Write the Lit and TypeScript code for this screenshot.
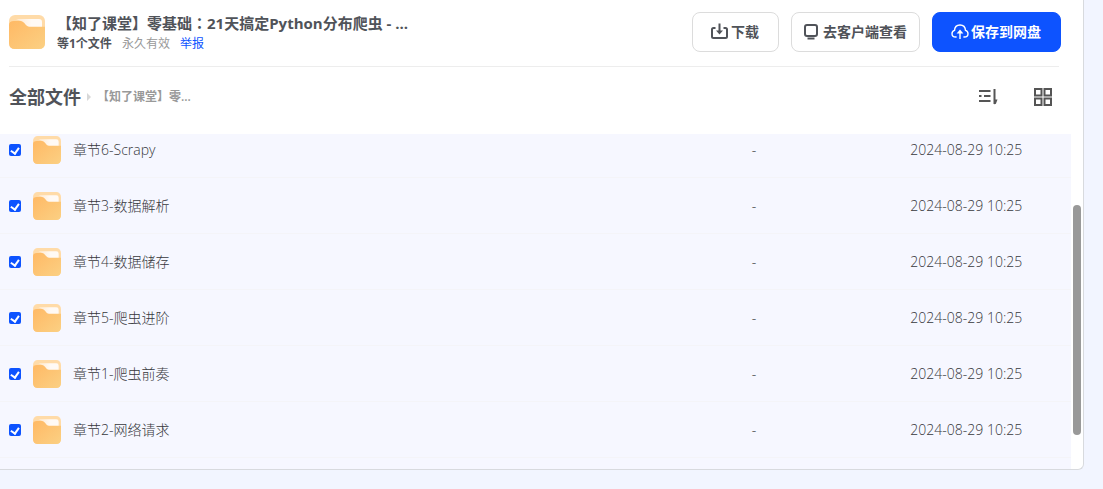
import { LitElement, html, css, svg } from "lit";
import { customElement, property } from "lit/decorators.js";

interface FileEntry {
  name: string;
  size: string;
  modified: string;
}

const FILES: FileEntry[] = [
  "章节6-Scrapy",
  "章节3-数据解析",
  "章节4-数据储存",
  "章节5-爬虫进阶",
  "章节1-爬虫前奏",
  "章节2-网络请求",
].map((name) => ({ name, size: "-", modified: "2024-08-29 10:25" }));

const ICONS = {
  download: svg`<path d="M4.5 5H2.5Q1 5 1 6.5V13.5Q1 15 2.5 15H14.5Q16 15 16 13.5V6.5Q16 5 14.5 5H12.5M8.5 0.5V9" /><path d="M5 7.5H12L8.5 11.5Z" fill="currentColor" stroke="none" />`,
  client: svg`<rect x="2" y="2" width="12" height="11" rx="2" /><path d="M4.5 15.5H11.5" />`,
  upload: svg`<path d="M5.6 14H4.8C2.5 14 1 12.6 1 10.7C1 9 2 7.9 3.5 7.4C3.7 4 6 2 9 2C12 2 14.3 4 14.5 7.4C16 7.9 17 9 17 10.7C17 12.6 15.5 14 13.2 14H12.4M9 8V16" /><path d="M5.6 10.4L9 6.6L12.4 10.4Z" fill="currentColor" stroke="none" />`,
  sort: svg`<path d="M0 3H11.5M0 8H2.5M5 8H11.5M0 13H11.5M15.5 1V16" /><path d="M15.5 11.5H18.5L17 15.5L15.5 16.5Z" fill="currentColor" stroke="none" />`,
  grid: svg`<rect x="1" y="1" width="6.5" height="6.5" /><rect x="10.5" y="1" width="6.5" height="6.5" /><rect x="1" y="10.5" width="6.5" height="6.5" /><rect x="10.5" y="10.5" width="6.5" height="6.5" />`,
};

@customElement("line-icon")
class LineIcon extends LitElement {
  static styles = css`
    :host {
      display: block;
      flex: none;
    }
    .glyph {
      display: block;
      fill: none;
      stroke: currentColor;
      stroke-width: 2;
    }
    .thin {
      stroke-width: 1.4;
    }
  `;

  @property() name: keyof typeof ICONS = "download";

  render() {
    const thin = this.name === "upload" ? "thin" : "";
    return html`<svg class="glyph ${thin}" width="19" height="18" viewBox="0 0 19 18" aria-hidden="true">
      ${ICONS[this.name]}
    </svg>`;
  }
}

@customElement("folder-icon")
class FolderIcon extends LitElement {
  static styles = css`
    :host {
      display: block;
      flex: none;
    }
    .folder {
      display: block;
      width: 100%;
      height: 100%;
    }
  `;

  render() {
    return html`<svg class="folder" viewBox="0 0 36 34" preserveAspectRatio="none" aria-hidden="true">
      <defs>
        <linearGradient id="front" x1="0" y1="0" x2="1" y2="1">
          <stop offset="0" stop-color="#ffb965" />
          <stop offset="1" stop-color="#fbd083" />
        </linearGradient>
        <linearGradient id="paper" x1="0" y1="0" x2="1" y2="0">
          <stop offset="0" stop-color="#ffe9cf" />
          <stop offset="0.6" stop-color="#fffaf5" />
        </linearGradient>
      </defs>
      <rect width="36" height="34" rx="6" fill="#ffdba8" />
      <path d="M7 4H30Q33 4 33 7V16H12V6Z" fill="url(#paper)" />
      <path
        d="M0 10Q0 6 5 6H11.5C15.5 6 16.5 11.7 20.5 11.7H36V28Q36 34 30 34H6Q0 34 0 28Z"
        fill="url(#front)"
      />
    </svg>`;
  }
}

@customElement("app-root")
class AppRoot extends LitElement {
  static styles = css`
    :host {
      display: block;
      box-sizing: border-box;
      height: 100vh;
      padding: 0 19px 19px 0;
      overflow: hidden;
      background: #f2f5ff;
      color: #505359;
      font-family: "Open Sans", "Noto Sans CJK SC", sans-serif;
      font-size: 14px;
      line-height: 20px;
    }
    * {
      box-sizing: border-box;
    }
    .card {
      display: flex;
      flex-direction: column;
      height: 100%;
      overflow: hidden;
      border: solid #d8dade;
      border-width: 0 1px 1px 0;
      border-radius: 0 0 6px 0;
      background: #fff;
    }
    .header {
      display: flex;
      align-items: center;
      gap: 12px;
      margin: 0 24px 0 9px;
      padding: 11px 0 13px;
      border-bottom: 1px solid #ededed;
    }
    .share-folder {
      width: 36px;
      height: 34px;
    }
    .summary {
      flex: 1;
      min-width: 0;
    }
    .title {
      margin: 0;
      font-size: 15px;
      line-height: 24px;
      font-weight: 700;
      white-space: nowrap;
    }
    .colon {
      font-family: "Noto Sans CJK TC", sans-serif;
      line-height: 1;
    }
    .meta {
      display: flex;
      gap: 10px;
      font-size: 12px;
      line-height: 18px;
    }
    .count {
      font-weight: 700;
    }
    .expiry {
      color: #999;
    }
    .report {
      color: #0d53ff;
      text-decoration: none;
    }
    .actions {
      display: flex;
      gap: 12px;
      margin-right: -2px;
    }
    .button {
      display: flex;
      align-items: center;
      gap: 1px;
      height: 40px;
      padding: 0 19px 0 18px;
      border: 1px solid #dcdcdc;
      border-radius: 8px;
      background: #fff;
      color: #505359;
      font: inherit;
      font-weight: 600;
      white-space: nowrap;
    }
    .button.compact {
      padding: 0 12px 0 11px;
    }
    .button.primary {
      border-color: #0d53ff;
      background: #0d53ff;
      color: #fff;
      font-weight: 700;
    }
    .toolbar {
      display: flex;
      align-items: center;
      justify-content: space-between;
      height: 67px;
      padding: 0 30px 7px 9px;
    }
    .crumbs {
      display: flex;
      align-items: center;
      gap: 6px;
    }
    .root {
      color: inherit;
      text-decoration: none;
      font-size: 18px;
      line-height: 26px;
      font-weight: 700;
    }
    .arrow {
      width: 0;
      height: 0;
      border: solid transparent;
      border-width: 4px 0 4px 4px;
      border-left-color: #d8d8d8;
    }
    .current {
      color: #999;
      font-size: 12px;
      font-weight: 600;
    }
    .views {
      display: flex;
      gap: 36px;
    }
    .view {
      padding: 0;
      border: 0;
      background: none;
      color: #555;
    }
    .body {
      display: flex;
      flex: 1;
      min-height: 0;
    }
    .list {
      flex: 1;
      min-width: 0;
      overflow: hidden;
      background: #f6f7ff;
    }
    .files {
      width: 100%;
      margin-top: -12px;
      border-collapse: collapse;
      table-layout: fixed;
    }
    .cell {
      height: 56px;
      padding: 0;
      text-align: left;
      color: #36383c;
      font-weight: 300;
      background: linear-gradient(#f4f4f8, #f4f4f8) bottom / 100% 1px no-repeat;
    }
    .size,
    .date {
      width: 15%;
    }
    .size {
      padding-left: 2px;
    }
    .entry {
      display: flex;
      align-items: center;
      gap: 12px;
      padding-left: 9px;
    }
    .tick {
      appearance: none;
      display: grid;
      place-items: center;
      width: 12px;
      height: 12px;
      margin: 0;
      border-radius: 2px;
      background: #0d53ff;
    }
    .tick:checked::before {
      content: "";
      width: 4px;
      height: 6px;
      margin-top: -1px;
      border: solid #fff;
      border-width: 0 2px 2px 0;
      transform: rotate(35deg);
    }
    .row-folder {
      width: 28px;
      height: 28px;
    }
    .track {
      display: grid;
      grid-template-rows: 71fr 230fr 34fr;
      width: 12px;
      padding: 0 2px;
    }
    .thumb {
      grid-row: 2;
      border-radius: 4px;
      background: #999;
    }
  `;

  private fileRow(file: FileEntry, index: number) {
    return html`<tr>
      <td class="cell">
        <div class="entry">
          <input class="tick" type="checkbox" id="file-${index}" checked />
          <folder-icon class="row-folder"></folder-icon>
          <label for="file-${index}">${file.name}</label>
        </div>
      </td>
      <td class="cell size">${file.size}</td>
      <td class="cell date">${file.modified}</td>
    </tr>`;
  }

  render() {
    return html`<main class="card">
      <header class="header">
        <folder-icon class="share-folder"></folder-icon>
        <div class="summary">
          <h1 class="title">【知了课堂】零基础<span class="colon">：</span>21天搞定Python分布爬虫 - ...</h1>
          <div class="meta">
            <span class="count">等1个文件</span>
            <span class="expiry">永久有效</span>
            <a class="report" href="#report">举报</a>
          </div>
        </div>
        <div class="actions">
          <button class="button"><line-icon name="download"></line-icon>下载</button>
          <button class="button compact"><line-icon name="client"></line-icon>去客户端查看</button>
          <button class="button primary"><line-icon name="upload"></line-icon>保存到网盘</button>
        </div>
      </header>
      <div class="toolbar">
        <nav class="crumbs">
          <a class="root" href="#all">全部文件</a>
          <span class="arrow"></span>
          <span class="current">【知了课堂】零...</span>
        </nav>
        <div class="views">
          <button class="view" aria-label="排序"><line-icon name="sort"></line-icon></button>
          <button class="view" aria-label="网格视图"><line-icon name="grid"></line-icon></button>
        </div>
      </div>
      <div class="body">
        <div class="list">
          <table class="files">
            <tbody>
              ${FILES.map((file, index) => this.fileRow(file, index))}
            </tbody>
          </table>
        </div>
        <div class="track"><div class="thumb"></div></div>
      </div>
    </main>`;
  }
}
